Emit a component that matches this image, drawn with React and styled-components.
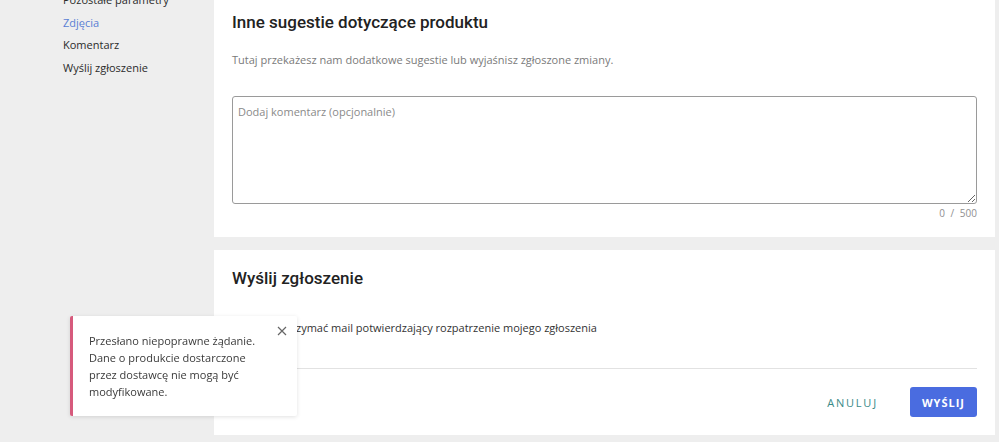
import styled, { createGlobalStyle } from "styled-components";

const GlobalStyle = createGlobalStyle`
  html, body {
    margin: 0;
    padding: 0;
    background: #eeeeee;
    font-family: "Open Sans", "Liberation Sans", sans-serif;
    overflow: hidden;
  }
`;

const Page = styled.div`
  display: grid;
  grid-template-columns: 214px 1fr;
  height: 442px;
  padding-right: 4px;
  box-sizing: border-box;
`;

const SideNav = styled.nav`
  display: flex;
  flex-direction: column;
  margin-top: -11px;
  padding-left: 63px;
`;

const NavItem = styled.a`
  font-size: 11px;
  line-height: 22.5px;
  color: ${(p) => (p.active ? "#5a7ed4" : "#2b2b2b")};
  text-decoration: none;
`;

const Main = styled.main`
  display: flex;
  flex-direction: column;
  gap: 13px;
`;

const Card = styled.section`
  background: #ffffff;
  padding: ${(p) => p.pad};
  display: flex;
  flex-direction: column;
`;

const Title = styled.h2`
  margin: 0;
  font-family: Roboto, "Liberation Sans", sans-serif;
  font-weight: 500;
  font-size: 17px;
  line-height: 24px;
  color: #222;
`;

const Desc = styled.p`
  margin: 17px 0 0;
  font-size: 11px;
  line-height: 17px;
  color: #7a7a7a;
`;

const TextArea = styled.textarea`
  margin-top: 28px;
  height: 108px;
  box-sizing: border-box;
  border: 1px solid #9a9a9a;
  border-radius: 3px;
  padding: 6px 5px;
  font-family: "Open Sans", "Liberation Sans", sans-serif;
  font-size: 11px;
  line-height: 17px;
  resize: vertical;
  outline: none;

  &::placeholder {
    color: #8a8a8a;
  }
`;

const Counter = styled.div`
  margin-top: 2px;
  text-align: right;
  font-size: 10px;
  line-height: 14px;
  color: #8f8f8f;
  word-spacing: 3px;
`;

const CheckRow = styled.label`
  margin-top: 27px;
  display: flex;
  align-items: center;
  gap: 5px;
  height: 20px;
  font-size: 11px;
  color: #333;
`;

const CheckBox = styled.span`
  width: 16px;
  height: 16px;
  box-sizing: border-box;
  border: 2px solid #777;
  border-radius: 2px;
`;

const Divider = styled.hr`
  margin: 31px 0 0;
  border: none;
  border-top: 1px solid #e2e2e2;
`;

const Actions = styled.div`
  margin-top: 18px;
  display: flex;
  justify-content: flex-end;
  align-items: center;
`;

const Button = styled.button`
  height: 30px;
  border: none;
  border-radius: 3px;
  padding: 0 ${(p) => (p.primary ? "12px" : "32px")};
  background: ${(p) => (p.primary ? "#4a6ce0" : "transparent")};
  color: ${(p) => (p.primary ? "#ffffff" : "#3a8a87")};
  font-family: "Open Sans", "Liberation Sans", sans-serif;
  font-size: 11px;
  font-weight: ${(p) => (p.primary ? 700 : 500)};
  letter-spacing: ${(p) => (p.primary ? "1px" : "1.8px")};
  cursor: pointer;
`;

const Toast = styled.div`
  position: fixed;
  left: 70px;
  top: 316px;
  width: 227px;
  height: 100px;
  box-sizing: border-box;
  background: #ffffff;
  border-left: 3px solid #d65a7c;
  border-radius: 2px;
  box-shadow: 0 1px 4px rgba(0, 0, 0, 0.12);
  padding: 16px 34px 0 16px;
  font-size: 11px;
  line-height: 17px;
  color: #3a3a3a;
`;

const CloseButton = styled.button`
  position: absolute;
  top: 9px;
  right: 9px;
  width: 12px;
  height: 12px;
  padding: 0;
  border: none;
  background: none;
  display: flex;
`;

export default function App() {
  return (
    <>
      <GlobalStyle />
      <Page>
        <SideNav>
          <NavItem>Pozostałe parametry</NavItem>
          <NavItem active>Zdjęcia</NavItem>
          <NavItem>Komentarz</NavItem>
          <NavItem>Wyślij zgłoszenie</NavItem>
        </SideNav>
        <Main>
          <Card pad="10px 18px 17px">
            <Title>Inne sugestie dotyczące produktu</Title>
            <Desc>
              Tutaj przekażesz nam dodatkowe sugestie lub wyjaśnisz zgłoszone
              zmiany.
            </Desc>
            <TextArea placeholder="Dodaj komentarz (opcjonalnie)" />
            <Counter>0 / 500</Counter>
          </Card>
          <Card pad="16px 18px 18px">
            <Title>Wyślij zgłoszenie</Title>
            <CheckRow>
              <CheckBox />
              Chcę otrzymać mail potwierdzający rozpatrzenie mojego zgłoszenia
            </CheckRow>
            <Divider />
            <Actions>
              <Button>ANULUJ</Button>
              <Button primary>WYŚLIJ</Button>
            </Actions>
          </Card>
        </Main>
      </Page>
      <Toast>
        Przesłano niepoprawne żądanie. Dane o produkcie dostarczone przez
        dostawcę nie mogą być modyfikowane.
        <CloseButton aria-label="Zamknij">
          <svg width="12" height="12" viewBox="0 0 12 12">
            <path d="M2 2 L10 10 M10 2 L2 10" stroke="#666" strokeWidth="1.2" />
          </svg>
        </CloseButton>
      </Toast>
    </>
  );
}
